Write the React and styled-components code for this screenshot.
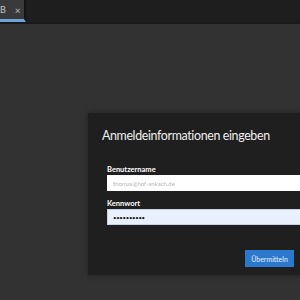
import React from 'react';
import styled, { createGlobalStyle } from 'styled-components';

const GlobalStyle = createGlobalStyle`
  html, body {
    margin: 0;
    padding: 0;
    background: #323232;
  }
  * {
    box-sizing: border-box;
  }
`;

// Fenster
const Screen = styled.div`
  width: 300px;
  height: 300px;
  display: flex;
  flex-direction: column;
  overflow: hidden;
  background: #323232;
  font-family: Lato, 'Open Sans', sans-serif;
`;

// Tab-Leiste oben
const TabBar = styled.div`
  height: 24px;
  display: flex;
  background: #1e1e1e;
  border-bottom: 2px solid #1a1a1a;
`;

const Tab = styled.div`
  width: 26px;
  display: flex;
  align-items: center;
  gap: 9px;
  padding-left: 0;
  background: #3a3a3a;
  border-bottom: 3px solid #6fa3d8;
  border-right: 2px solid #141414;
  color: #c8c8c8;
  font-size: 9px;
`;

const TabClose = styled.span`
  font-size: 10px;
  color: #b8b8b8;
`;

// Arbeitsbereich mit Dialog
const Workspace = styled.div`
  flex: 1;
  display: flex;
  align-items: flex-start;
  padding: 89px 0 0 88px;
`;

const Dialog = styled.div`
  width: 260px;
  height: 162px;
  flex-shrink: 0;
  display: flex;
  flex-direction: column;
  padding: 14px 0 0 14px;
  background: #1f1f1f;
  box-shadow: 0 0 6px rgba(0, 0, 0, 0.35);
`;

const Title = styled.h1`
  margin: 0;
  font-size: 12.4px;
  font-weight: 400;
  line-height: 18px;
  letter-spacing: -0.35px;
  color: #f0f0f0;
`;

const Form = styled.div`
  display: flex;
  flex-direction: column;
  padding: 20px 0 0 5px;
`;

const Label = styled.label`
  font-size: 7.5px;
  font-weight: 700;
  line-height: 10px;
  color: #ffffff;
  margin-top: ${({ $top }) => $top || 0}px;
`;

const Input = styled.div`
  height: 16px;
  display: flex;
  align-items: center;
  padding-left: 5px;
  background: ${({ $filled }) => ($filled ? '#e8f0fe' : '#ffffff')};
  border: 1px solid ${({ $filled }) => ($filled ? '#c6d3e6' : '#ffffff')};
  color: ${({ $filled }) => ($filled ? '#1a1a1a' : '#b4b4b4')};
  font-size: 6px;
  letter-spacing: ${({ $filled }) => ($filled ? '-0.3px' : '0')};
  filter: ${({ $filled }) => ($filled ? 'none' : 'blur(0.4px)')};
`;

const Footer = styled.div`
  display: flex;
  padding: 25px 0 0 143px;
`;

const SubmitButton = styled.button`
  width: 49px;
  height: 17px;
  padding: 0;
  border: none;
  background: #2b79cf;
  color: #e6eef8;
  font-family: inherit;
  font-size: 7px;
`;

export default function App() {
  return (
    <>
      <GlobalStyle />
      <Screen>
        <TabBar>
          <Tab>
            <span>B</span>
            <TabClose>×</TabClose>
          </Tab>
        </TabBar>
        <Workspace>
          <Dialog>
            <Title>Anmeldeinformationen eingeben</Title>
            <Form>
              <Label>Benutzername</Label>
              <Input>thomas@hof-ankach.de</Input>
              <Label $top={8}>Kennwort</Label>
              <Input $filled>••••••••••</Input>
            </Form>
            <Footer>
              <SubmitButton>Übermitteln</SubmitButton>
            </Footer>
          </Dialog>
        </Workspace>
      </Screen>
    </>
  );
}
